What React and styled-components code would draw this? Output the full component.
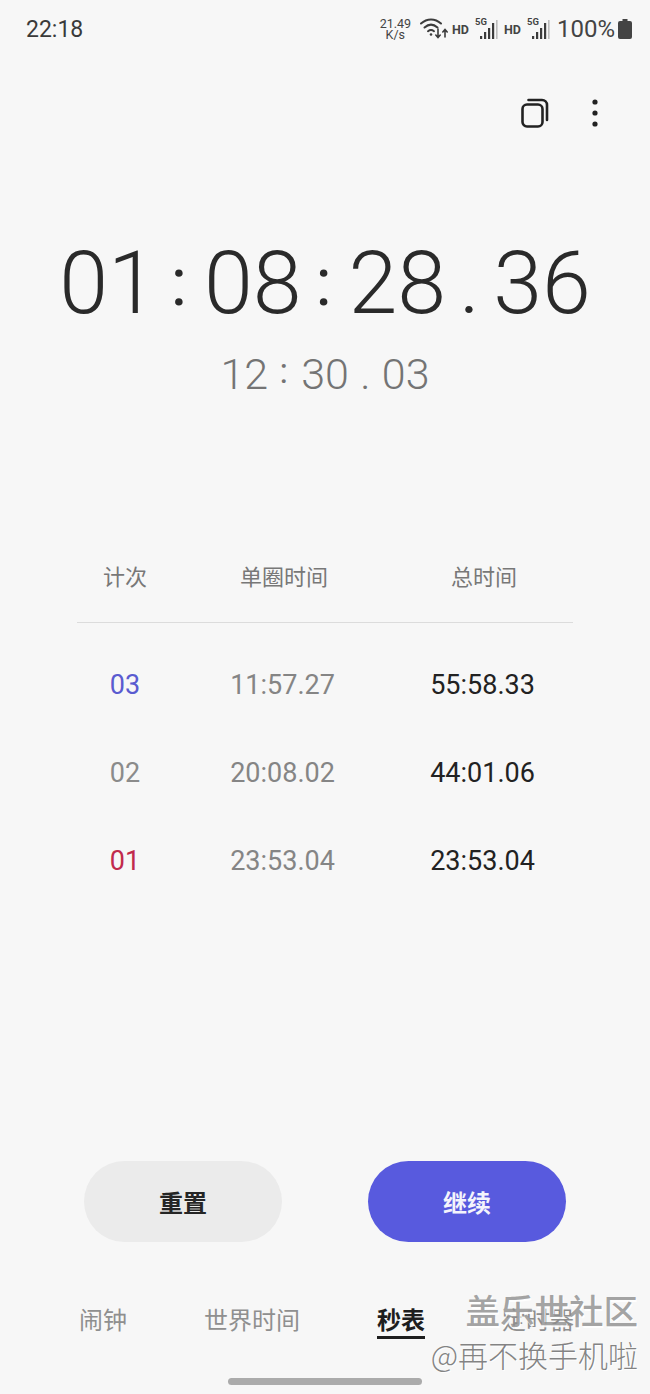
import React from 'react';
import styled, { createGlobalStyle } from 'styled-components';

const cjk = '"Noto Sans CJK SC", Roboto, sans-serif';

const GlobalStyle = createGlobalStyle`
  html, body {
    margin: 0;
    padding: 0;
    background-color: #f7f7f7;
  }
  body {
    font-family: Roboto, "Noto Sans CJK SC", sans-serif;
  }
`;

const Screen = styled.div`
  position: relative;
  width: 650px;
  height: 1394px;
  overflow: hidden;
  background-color: #f7f7f7;
  display: flex;
  flex-direction: column;
`;

const StatusBar = styled.div`
  height: 58px;
  padding: 0 18px 0 26px;
  display: flex;
  align-items: center;
  justify-content: space-between;
  color: #3a3a3a;
`;

const Clock = styled.span`
  font-size: 23px;
`;

const StatusIcons = styled.div`
  display: flex;
  align-items: center;
`;

const Speed = styled.div`
  font-size: 12.5px;
  line-height: 11px;
  text-align: center;
  margin-right: 9px;
  color: #444;
`;

const HdLabel = styled.span`
  font-size: 12.5px;
  font-weight: 700;
  margin: 0 6px 0 ${props => props.$gap || 0}px;
  color: #444;
`;

const Battery = styled.span`
  font-size: 24px;
  margin: 0 3px 0 7px;
  color: #444;
`;

const Toolbar = styled.div`
  margin-top: 28px;
  height: 54px;
  padding-right: 52px;
  display: flex;
  align-items: center;
  justify-content: flex-end;
  gap: 43px;
`;

const TimeRow = styled.div`
  display: flex;
  justify-content: center;
  font-weight: 300;
  color: ${props => props.$sub ? '#747474' : '#2a2a2a'};
  font-size: ${props => props.$sub ? 43 : 88}px;
  line-height: ${props => props.$sub ? 50 : 100}px;
  margin-top: ${props => props.$sub ? 16 : 93}px;
`;

const Sep = styled.span`
  width: ${props => props.$sub ? 33 : 47}px;
  text-align: center;
`;

// the colon sits higher and tighter than the font's own, so it gets a smaller size and line box
const Colon = styled(Sep)`
  font-size: ${props => props.$sub ? 35 : 67}px;
  font-weight: 400;
  line-height: ${props => props.$sub ? 46 : 99}px;
  padding-right: ${props => props.$sub ? 2 : 3}px;
  box-sizing: border-box;
`;

const LapHeader = styled.div`
  margin: 163px 77px 0;
  height: 60px;
  border-bottom: 1px solid #dcdcdc;
  display: grid;
  grid-template-columns: 96px 222px 178px;
  align-items: start;
  text-align: center;
  font-family: ${cjk};
  font-size: 22px;
  line-height: 26px;
  color: #787878;
`;

const LapList = styled.div`
  margin: 18px 77px 0;
`;

const LapRow = styled.div`
  height: 88px;
  display: grid;
  grid-template-columns: 96px 219px 181px;
  align-items: center;
  text-align: center;
  font-size: 27px;
`;

const LapNumber = styled.span`
  color: ${props => props.$color};
`;

const LapTime = styled.span`
  color: #858585;
`;

const LapTotal = styled.span`
  color: #222;
`;

const Buttons = styled.div`
  margin-top: 256px;
  padding: 0 84px;
  display: flex;
  justify-content: space-between;
`;

const ActionBtn = styled.button`
  width: 198px;
  height: 81px;
  border: none;
  border-radius: 41px;
  font-family: ${cjk};
  font-size: 24px;
  font-weight: 700;
  background-color: ${props => props.$primary ? '#585ade' : '#ebebeb'};
  color: ${props => props.$primary ? '#f4f4fc' : '#252525'};
`;

const Tabs = styled.div`
  margin-top: 56px;
  padding-left: 79px;
  display: flex;
  gap: 77px;
`;

const Tab = styled.div`
  height: 41px;
  font-family: ${cjk};
  font-size: 24px;
  line-height: 41px;
  box-sizing: border-box;
  font-weight: ${props => props.$active ? 700 : 400};
  color: ${props => props.$active ? '#1e1e1e' : '#8f8f8f'};
  border-bottom: 3px solid ${props => props.$active ? '#1e1e1e' : 'transparent'};
`;

const HomeBar = styled.div`
  margin: 39px auto 0;
  width: 194px;
  height: 7px;
  border-radius: 4px;
  background-color: #ababab;
`;

const Watermark = styled.div`
  position: absolute;
  top: 1286px;
  right: 12px;
  text-align: right;
  font-family: ${cjk};
  pointer-events: none;
`;

const WatermarkTitle = styled.div`
  font-size: 34.5px;
  line-height: 46px;
  font-weight: 500;
  color: rgba(140, 140, 140, 0.8);
  text-shadow: 1px 2px 0 rgba(255, 255, 255, 0.9);
`;

const WatermarkUser = styled.div`
  font-size: 30px;
  line-height: 40px;
  margin-top: 2px;
  font-weight: 300;
  color: rgba(110, 110, 110, 0.85);
  text-shadow: 1px 1px 0 rgba(255, 255, 255, 0.9);
`;

function WifiIcon() {
  return (
    <svg width="28" height="24" viewBox="0 0 28 24" fill="none" stroke="#3c3c3c" strokeWidth="2" strokeLinecap="round">
      <path d="M1 6.5C7 1 15 1 21 6.5" />
      <path d="M4.5 10.5C9 6.5 13 6.5 17.5 10.5" />
      <path d="M8 14.2C10 12.6 12 12.6 14 14.2" />
      <circle cx="11" cy="17.5" r="1.3" fill="#3c3c3c" stroke="none" />
      <path d="M18 12v8M15.8 18l2.2 2.5 2.2-2.5" strokeWidth="1.6" />
      <path d="M25 20v-7M22.8 15l2.2-2.5 2.2 2.5" strokeWidth="1.6" />
    </svg>
  );
}

function SignalIcon() {
  return (
    <svg width="23" height="24" viewBox="0 0 23 24">
      <text x="0" y="8" fontSize="9.5" fontWeight="700" fontFamily="Roboto, sans-serif" fill="#444">5G</text>
      <rect x="5" y="19" width="2.2" height="3" fill="#3c3c3c" />
      <rect x="9" y="15" width="2.2" height="7" fill="#3c3c3c" />
      <rect x="13" y="11" width="2.2" height="11" fill="#3c3c3c" />
      <rect x="17" y="6" width="2.2" height="16" fill="#3c3c3c" />
      <rect x="21" y="3" width="1.6" height="19" fill="#bdbdbd" />
    </svg>
  );
}

function BatteryIcon() {
  return (
    <svg width="14" height="20" viewBox="0 0 14 20">
      <path d="M4.5 0h5v2H12a2 2 0 0 1 2 2v14a2 2 0 0 1-2 2H2a2 2 0 0 1-2-2V4a2 2 0 0 1 2-2h2.5z" fill="#444" />
    </svg>
  );
}

function CopyIcon() {
  return (
    <svg width="28" height="30" viewBox="0 0 28 30" fill="none" stroke="#222" strokeWidth="2.6" strokeLinecap="round">
      <rect x="1.5" y="6.5" width="20" height="22" rx="4.5" />
      <path d="M7.5 2h13.5a5 5 0 0 1 5 5v15" />
    </svg>
  );
}

function MoreIcon() {
  return (
    <svg width="6" height="28" viewBox="0 0 6 28" fill="#222">
      <circle cx="3" cy="3" r="2.6" />
      <circle cx="3" cy="14" r="2.6" />
      <circle cx="3" cy="25" r="2.6" />
    </svg>
  );
}

const laps = [
  { no: '03', color: '#5a5bd0', lap: '11:57.27', total: '55:58.33' },
  { no: '02', color: '#8b8b8b', lap: '20:08.02', total: '44:01.06' },
  { no: '01', color: '#c12a4c', lap: '23:53.04', total: '23:53.04' },
];

export default function App() {
  return (
    <Screen>
      <GlobalStyle />
      <StatusBar>
        <Clock>22:18</Clock>
        <StatusIcons>
          <Speed>21.49<br />K/s</Speed>
          <WifiIcon />
          <HdLabel $gap={4}>HD</HdLabel>
          <SignalIcon />
          <HdLabel $gap={6}>HD</HdLabel>
          <SignalIcon />
          <Battery>100%</Battery>
          <BatteryIcon />
        </StatusIcons>
      </StatusBar>

      <Toolbar>
        <CopyIcon />
        <MoreIcon />
      </Toolbar>

      <TimeRow>
        <span>01</span><Colon>:</Colon><span>08</span><Colon>:</Colon><span>28</span><Sep>.</Sep><span>36</span>
      </TimeRow>
      <TimeRow $sub>
        <span>12</span><Colon $sub>:</Colon><span>30</span><Sep $sub>.</Sep><span>03</span>
      </TimeRow>

      <LapHeader>
        <span>计次</span>
        <span>单圈时间</span>
        <span>总时间</span>
      </LapHeader>
      <LapList>
        {laps.map(l => (
          <LapRow key={l.no}>
            <LapNumber $color={l.color}>{l.no}</LapNumber>
            <LapTime>{l.lap}</LapTime>
            <LapTotal>{l.total}</LapTotal>
          </LapRow>
        ))}
      </LapList>

      <Buttons>
        <ActionBtn>重置</ActionBtn>
        <ActionBtn $primary>继续</ActionBtn>
      </Buttons>

      <Tabs>
        <Tab>闹钟</Tab>
        <Tab>世界时间</Tab>
        <Tab $active>秒表</Tab>
        <Tab>定时器</Tab>
      </Tabs>
      <HomeBar />

      <Watermark>
        <WatermarkTitle>盖乐世社区</WatermarkTitle>
        <WatermarkUser>@再不换手机啦</WatermarkUser>
      </Watermark>
    </Screen>
  );
}
